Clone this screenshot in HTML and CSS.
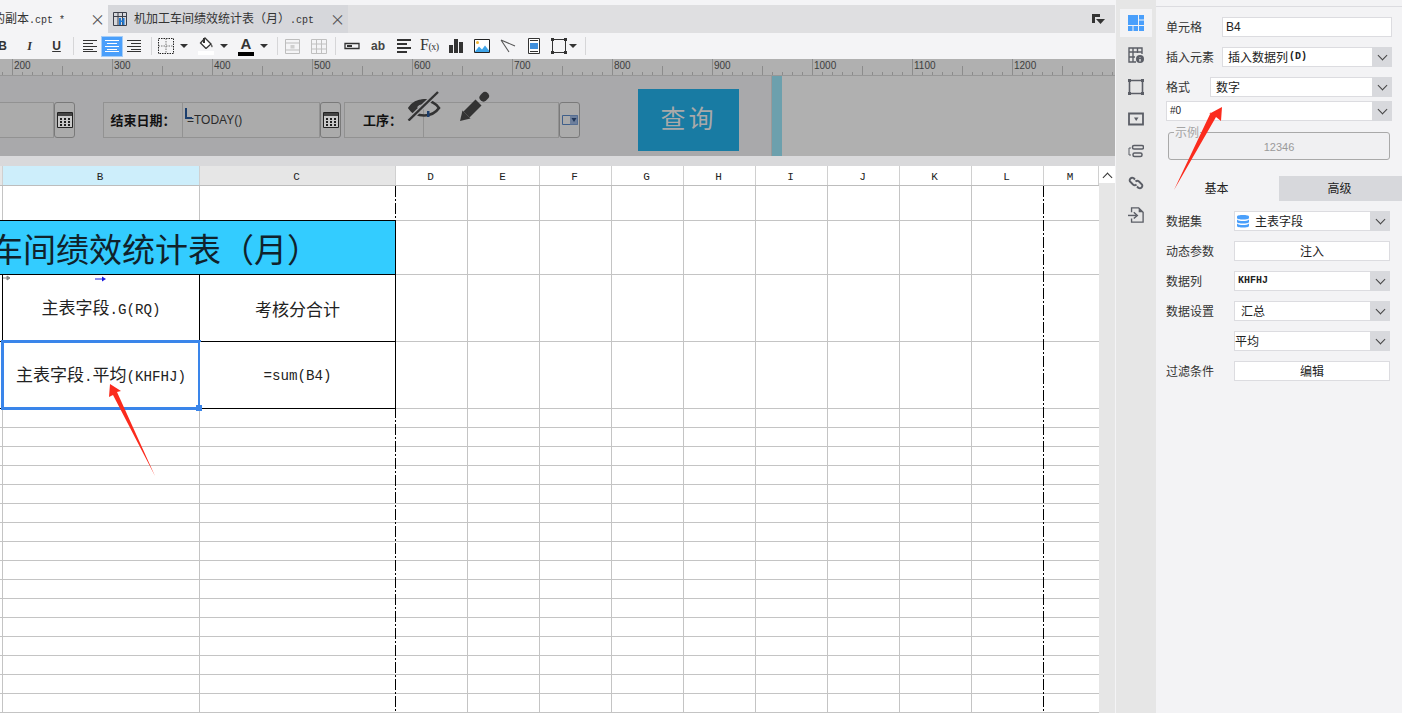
FILE: index.html
```html
<!DOCTYPE html>
<html lang="zh-CN">
<head>
<meta charset="UTF-8">
<meta name="viewport" content="width=device-width, initial-scale=1.0">
<title>报表设计器</title>
<link rel="stylesheet" href="styles.css">
</head>
<body>

<div class="editor">
    <div class="top-strip"></div>

    <!-- Tabs -->
    <div class="tabs-bar">
        <div class="file-tab active">
            <span class="tab-name clipped">的副本<span class="mono-sm">.cpt *</span></span>
            <span class="tab-close">×</span>
        </div>
        <div class="file-tab">
            <svg class="tab-icon" viewBox="0 0 14 14"><path d="M.5.5h13v13H.5zM.5 4.500h13M5 .5v13M9.500.5v13" fill="none" stroke="#3b3f4a"/><path d="M6 6h2v2.500h1.500V6h2v7h-2v-3H8v3H6z" fill="#1f78d1"/></svg>
            <span class="tab-name">机加工车间绩效统计表（月）<span class="mono-sm">.cpt</span></span>
            <span class="tab-close">×</span>
        </div>
        <svg class="tabs-menu" viewBox="0 0 13 10"><path d="M0 0h8v3H3v6H0z" fill="#333"/><path d="M4 5h9l-4.500 5z" fill="#333"/></svg>
    </div>

    <!-- Toolbar -->
    <div class="toolbar">
        <span class="tool-text bold">B</span>
        <span class="tool-text italic">I</span>
        <span class="tool-text under">U</span>
        <span class="sep sep-a"></span>
        <span class="tool-align"><svg viewBox="0 0 14 12"><path d="M0 .5h14M0 3.500h10M0 6.500h14M0 9.500h10M0 11.500h14" stroke="#333"/></svg></span>
        <span class="tool-align on"><svg viewBox="0 0 14 12"><path d="M0 .5h14M2 3.500h10M0 6.500h14M2 9.500h10M0 11.500h14" stroke="#fff"/></svg></span>
        <span class="tool-align"><svg viewBox="0 0 14 12"><path d="M0 .5h14M4 3.500h10M0 6.500h14M4 9.500h10M0 11.500h14" stroke="#333"/></svg></span>
        <span class="sep sep-b"></span>
        <span class="tool-drop">
            <svg class="ico" viewBox="0 0 16 16"><path d="M.5.5h15v15H.5z" fill="none" stroke="#222" stroke-dasharray="1.500 1"/><path d="M8 .5v15M.5 8h15" stroke="#777" stroke-dasharray="1.500 1"/></svg>
            <i class="caret"></i>
        </span>
        <span class="tool-drop">
            <span class="fill-icon">
                <svg viewBox="0 0 16 12"><path d="M7 1l6 6-5 4.500L2.500 6z" fill="#fff" stroke="#333" stroke-width="1.300"/><path d="M5 1h2v5H5z" fill="#333"/><path d="M13.500 7c1 1.500 1.500 2.500.5 3.500-1-1-1-2-.5-3.500z" fill="#333"/></svg>
                <i class="color-bar white"></i>
            </span>
            <i class="caret"></i>
        </span>
        <span class="tool-drop">
            <span class="font-color">
                <b>A</b>
                <i class="color-bar black"></i>
            </span>
            <i class="caret"></i>
        </span>
        <span class="sep sep-c"></span>
        <svg class="ico ico-off" viewBox="0 0 15 15"><path d="M.5.5h14v14H.5zM.5 4h14M.5 11h14" fill="none" stroke="#bdbdbd"/><path d="M5.500 6h4v3.500h-4z" fill="#cfcfcf"/></svg>
        <svg class="ico ico-off2" viewBox="0 0 16 15"><path d="M.5.500h15v14H.5zM.5 5h15M.5 10h15M5.500.5v14M10.500.5v14" fill="none" stroke="#c0c0c0"/></svg>
        <span class="sep sep-d"></span>
        <span class="tool-group">
            <svg class="ico" viewBox="0 0 16 16"><path d="M1 5.500h14v5H1z" fill="none" stroke="#333" stroke-width="1.300"/><path d="M3 7h5v2H3z" fill="#333"/></svg>
            <span class="ab">ab</span>
            <svg class="ico" viewBox="0 0 16 16"><path d="M1 2h14M1 6h10M1 10h14M1 14h10" stroke="#333" stroke-width="2"/></svg>
            <span class="fx">F<small>(x)</small></span>
            <svg class="ico" viewBox="0 0 16 16"><path d="M1 7h4v8H1zM6 1h4v14H6zM11 4h4v11h-4z" fill="#333"/></svg>
            <svg class="ico" viewBox="0 0 16 16"><path d="M.5 1.500h15v13H.5z" fill="#fff" stroke="#222"/><path d="M1 13.500l4-5 3 3 3-4 4 5v1.500H1z" fill="#3ea4e8"/><circle cx="3.500" cy="4.500" r="1.500" fill="#f2b632"/></svg>
            <svg class="ico" viewBox="0 0 16 16"><path d="M1 2l14 6M1 2l8 12" fill="none" stroke="#555" stroke-width="1.100"/></svg>
            <svg class="ico" viewBox="0 0 16 16"><path d="M2.500.5h11v15h-11z" fill="#fff" stroke="#333"/><path d="M4 2.500h8M4 13.500h8" stroke="#333"/><path d="M4 5h8v6H4z" fill="#3f8fdc"/></svg>
        </span>
        <span class="tool-drop drop-last">
            <svg class="ico" viewBox="0 0 16 16"><path d="M1.500 1.500h13v13h-13z" fill="none" stroke="#333"/><path d="M0 0h3v3H0zM13 0h3v3h-3zM0 13h3v3H0zM13 13h3v3h-3z" fill="#333"/></svg>
            <i class="caret"></i>
        </span>
        <span class="sep sep-e"></span>
    </div>

    <!-- Ruler -->
    <div class="ruler">
        <span class="mark">200</span><span class="mark">300</span><span class="mark">400</span><span class="mark">500</span><span class="mark">600</span><span class="mark">700</span><span class="mark">800</span><span class="mark">900</span><span class="mark">1000</span><span class="mark">1100</span><span class="mark">1200</span>
    </div>

    <!-- Parameter pane -->
    <div class="param-bar">
        <div class="param-form">
            <div class="pfield first"></div>
            <div class="pbtn">
                <svg class="cal" viewBox="0 0 16 16"><use href="#cal"/></svg>
            </div>
            <div class="plabel gap-left">结束日期：</div>
            <div class="pfield date"><i class="cursor"></i>=TODAY()</div>
            <div class="pbtn">
                <svg class="cal" viewBox="0 0 16 16"><use href="#cal"/></svg>
            </div>
            <div class="plabel work">工序：</div>
            <div class="pfield combo"></div>
            <div class="pbtn">
                <svg class="pick" viewBox="0 0 16 10"><path d="M.5.500h15v9H.5z" fill="none" stroke="#3f5f8a"/><path d="M8 .5h7.500v9H8z" fill="#6d7f9c"/><path d="M9.500 3h5L12 7z" fill="#1f3558"/></svg>
            </div>
            <button class="query">查询</button>
        </div>
        <div class="param-handle"></div>
        <div class="param-rest"></div>
    </div>
    <div class="band"></div>

    <!-- Sheet -->
    <div class="sheet-wrap">
        <div class="sheet">
            <div class="col-head">
                <span class="h-a"></span>
                <span class="h-b">B</span>
                <span class="h-c">C</span>
                <span class="h-n">D</span><span class="h-n">E</span><span class="h-n">F</span><span class="h-n">G</span><span class="h-n">H</span><span class="h-n">I</span><span class="h-n">J</span><span class="h-n">K</span><span class="h-n">L</span>
                <span class="h-m">M</span>
            </div>
            <div class="sheet-body">
                <div class="row r-35"></div>
                <div class="row r-54">
                    <div class="cell title">车间绩效统计表（月）</div>
                </div>
                <div class="row r-67">
                    <div class="cell c-a"></div>
                    <div class="cell c-b">
                        <svg class="flow flow-grey" viewBox="0 0 8 6"><path d="M0 3h5M4 1l3 2-3 2z" stroke="#888" fill="#888"/></svg>
                        <svg class="flow flow-blue" viewBox="0 0 11 6"><path d="M0 3h8" stroke="#1a1ae0"/><path d="M7 .5L11 3 7 5.500z" fill="#1a1ae0"/></svg>
                        <span class="cell-text">主表字段<span class="mono">.G(RQ)</span></span>
                    </div>
                    <div class="cell c-c">考核分合计</div>
                </div>
                <div class="row r-67">
                    <div class="cell c-a"></div>
                    <div class="cell c-b selected"><span class="cell-text">主表字段<span class="mono">.</span>平均<span class="mono">(KHFHJ)</span></span><i class="sel-handle"></i></div>
                    <div class="cell c-c"><span class="mono formula">=sum(B4)</span></div>
                </div>
                <div class="row"></div><div class="row"></div><div class="row"></div><div class="row"></div>
                <div class="row"></div><div class="row"></div><div class="row"></div><div class="row"></div>
                <div class="row"></div><div class="row"></div><div class="row"></div><div class="row"></div>
                <div class="row"></div><div class="row"></div><div class="row"></div><div class="row"></div>
                <div class="page-break pb-c"></div>
                <div class="page-break pb-l"></div>
            </div>
        </div>
        <div class="scrollbar">
            <div class="scroll-up"><i></i></div>
        </div>
    </div>
</div>

<!-- Icon strip -->
<div class="icon-strip">
    <div class="side-tile on">
        <svg viewBox="0 0 16 16"><path d="M0 0h10v10H0zM11 0h5v4.500h-5zM11 5.500h5V10h-5zM0 11h4.500v5H0zM5.500 11H10v5H5.500zM11 11h5v5h-5z" fill="#4a9ffb"/></svg>
    </div>
    <div class="side-tile">
        <svg viewBox="0 0 16 16"><path d="M8 15H1V1h13v6M1 5h13M1 10h6M5 1v14M9.500 1v5" fill="none" stroke="#5b5e66" stroke-width="1.400"/><circle cx="12" cy="12" r="4" fill="#5b5e66"/><path d="M12 10.500V11M12 12v2.500" stroke="#fff" stroke-width="1.200"/></svg>
    </div>
    <div class="side-tile">
        <svg viewBox="0 0 16 16"><path d="M1.500 1.500h13v13h-13z" fill="none" stroke="#5b5e66" stroke-width="1.600"/><path d="M0 0h3v3H0zM13 0h3v3h-3zM0 13h3v3H0zM13 13h3v3h-3z" fill="#5b5e66"/></svg>
    </div>
    <div class="side-tile">
        <svg viewBox="0 0 16 16"><path d="M1 2.500h14v11H1z" fill="none" stroke="#5b5e66" stroke-width="1.800"/><path d="M6 6.500h4.500L8.200 10z" fill="#5b5e66"/></svg>
    </div>
    <div class="side-tile">
        <svg viewBox="0 0 16 16"><path d="M3 5H1v7h2" fill="none" stroke="#5b5e66"/><rect x="4.500" y="2.500" width="11" height="3.500" rx="1.500" fill="none" stroke="#5b5e66" stroke-width="1.500"/><rect x="5" y="10" width="9" height="3.500" rx="1.500" fill="none" stroke="#5b5e66" stroke-width="1.500"/></svg>
    </div>
    <div class="side-tile">
        <svg viewBox="0 0 16 16"><path d="M7 4.500L5.500 3a2.600 2.600 0 0 0-3.500 3.500l3 3a2.600 2.600 0 0 0 3.500 0M9 11.500l1.500 1.500a2.600 2.600 0 0 0 3.500-3.500l-3-3a2.600 2.600 0 0 0-3.500 0" fill="none" stroke="#5b5e66" stroke-width="1.900"/></svg>
    </div>
    <div class="side-tile">
        <svg viewBox="0 0 18 18"><path d="M4 6V1h8l5 5v11H4v-4" fill="none" stroke="#5b5e66" stroke-width="1.500"/><path d="M12 1v5h5" fill="#5b5e66"/><path d="M0 9.500h9" stroke="#5b5e66" stroke-width="1.600"/><path d="M6.500 6l4 3.500-4 3.500" fill="none" stroke="#5b5e66" stroke-width="1.600"/></svg>
    </div>
</div>

<!-- Properties panel -->
<div class="panel">
    <div class="panel-line"></div>
    <div class="props">
        <div class="field">
            <label class="w-56">单元格</label>
            <div class="input sans">B4</div>
        </div>
        <div class="field">
            <label class="w-56">插入元素</label>
            <div class="select"><span class="select-text pad-5">插入数据列<span class="small-key">(D)</span></span><span class="select-arrow"></span></div>
        </div>
        <div class="field">
            <label class="w-44">格式</label>
            <div class="select"><span class="select-text pad-5">数字</span><span class="select-arrow"></span></div>
        </div>
        <div class="field tight">
            <div class="select"><span class="select-text num-fmt">#0</span><span class="select-arrow"></span></div>
        </div>
        <fieldset class="sample">
            <legend>示例</legend>
            <div class="sample-num">12346</div>
        </fieldset>
    </div>

    <div class="panel-tabs">
        <div class="ptab on">基本</div>
        <div class="ptab">高级</div>
    </div>

    <div class="data-props">
        <div class="field">
            <label class="w-68">数据集</label>
            <div class="select">
                <span class="select-text ds">
                    <svg viewBox="0 0 12 14"><path d="M0 2.500C0 .5 12 .5 12 2.500v1.500C12 6 0 6 0 4zM0 5.500c2 2 10 2 12 0V8c0 2-12 2-12 0zM0 9.500c2 2 10 2 12 0V12c0 2-12 2-12 0z" fill="#4a9ffb"/></svg>
                    主表字段
                </span>
                <span class="select-arrow"></span>
            </div>
        </div>
        <div class="field">
            <label class="w-68">动态参数</label>
            <div class="btn">注入</div>
        </div>
        <div class="field">
            <label class="w-68">数据列</label>
            <div class="select"><span class="select-text col-name">KHFHJ</span><span class="select-arrow"></span></div>
        </div>
        <div class="field">
            <label class="w-68">数据设置</label>
            <div class="select"><span class="select-text pad-6">汇总</span><span class="select-arrow"></span></div>
        </div>
        <div class="field">
            <label class="w-68"></label>
            <div class="select"><span class="select-text">平均</span><span class="select-arrow"></span></div>
        </div>
        <div class="field">
            <label class="w-68">过滤条件</label>
            <div class="btn">编辑</div>
        </div>
    </div>
</div>

<!-- Shared calendar symbol -->
<svg class="defs" width="0" height="0">
    <symbol id="cal" viewBox="0 0 16 16">
        <path d="M.5.500h15v15H.5z" fill="#c9c9c9" stroke="#222"/>
        <path d="M1 1h14v3H1z" fill="#444"/>
        <path d="M3 6h2v2H3zM7 6h2v2H7zM11 6h2v2h-2zM3 9h2v2H3zM7 9h2v2H7zM11 9h2v2h-2zM3 12h2v2H3zM7 12h2v2H7zM11 12h2v2h-2z" fill="#222"/>
    </symbol>
</svg>

<!-- Things drawn over the designer -->
<svg class="eye-off" viewBox="0 0 34 30">
    <path d="M2.500 17C9 7 25 7 32 17 25 27 9 27 2.500 17z" fill="none" stroke="#333" stroke-width="2.600"/>
    <path d="M3 17C8 9 17 7 24 8.500L9 24C6 22 4.500 19.500 3 17z" fill="#333"/>
    <path d="M10 16.500c1-2 3-3 5-3l-3.500 3.500z" fill="#a9a9ab"/>
    <path d="M20 20v6h2.500v-6z" fill="#1c3f6e"/>
    <path d="M2 29L31 1" stroke="#a9a9ab" stroke-width="5"/>
    <path d="M1.500 29.500L31 1" stroke="#333" stroke-width="2.400"/>
</svg>
<svg class="pencil" viewBox="0 0 32 32">
    <path d="M1 31l2.500-10.500 8 8z" fill="#333"/>
    <path d="M7.500 24.500L19.500 12.500" stroke="#333" stroke-width="8.500"/>
    <path d="M24.500 7.500l1.500-1.500" stroke="#333" stroke-width="8" stroke-linecap="round"/>
</svg>
<svg class="arrows" viewBox="0 0 1402 713">
    <polygon points="110,384 121,391 117,392 155,476 113,395 109,397" fill="#fb2b1d"/>
    <polygon points="1222,107 1221,121 1216,117 1174,190 1211,112 1209,114" fill="#fb2b1d"/>
</svg>

</body>
</html>
```

FILE: styles.css
```css
/* Basic Reset */
* {
    margin: 0;
    padding: 0;
    box-sizing: border-box;
}

body {
    position: relative;
    display: flex;
    width: 1402px;
    height: 713px;
    overflow: hidden;
    background: #fff;
    font-family: "Noto Sans CJK SC", "Liberation Sans", sans-serif;
    font-size: 12px;
    color: #222;
}

.defs {
    position: absolute;
}

/* Editor column */
.editor {
    width: 1115px;
    flex: none;
    display: flex;
    flex-direction: column;
}

.top-strip {
    height: 5px;
    background: #f4f4f6;
}

/* Tabs */
.tabs-bar {
    height: 28px;
    display: flex;
    background: #dfdfe1;
}

.file-tab {
    display: flex;
    align-items: center;
    width: 240px;
    padding-left: 5px;
    background: #d6d7db;
    overflow: hidden;
    white-space: nowrap;
}

.file-tab.active {
    width: 108px;
    padding-left: 0;
    background: #f4f4f6;
}

.tab-icon {
    width: 14px;
    height: 14px;
    margin-right: 7px;
}

.tab-name {
    line-height: 16px;
    color: #333;
}

.tab-name.clipped {
    margin-left: -7px;
}

.mono-sm {
    font-family: "Liberation Mono", monospace;
    font-size: 10px;
}

.tab-close {
    margin-left: auto;
    width: 18px;
    font-size: 15px;
    line-height: 16px;
    color: #555;
}

.tabs-menu {
    width: 13px;
    height: 10px;
    margin: 9px 10px 0 auto;
}

/* Toolbar */
.toolbar {
    height: 26px;
    display: flex;
    align-items: center;
    background: #f4f4f6;
    white-space: nowrap;
    overflow: hidden;
}

.tool-text {
    width: 27px;
    text-align: center;
    font-family: "Liberation Sans", sans-serif;
    font-size: 12px;
    color: #333;
}

.tool-text.bold {
    margin-left: -11px;
    font-weight: bold;
}

.tool-text.italic {
    font-family: "Liberation Serif", serif;
    font-style: italic;
    font-weight: bold;
}

.tool-text.under {
    font-weight: bold;
    text-decoration: underline;
}

.sep {
    width: 1px;
    height: 18px;
    background: #d6d6d8;
    flex: none;
}

.sep-a { margin: 0 5px 0 3px; }
.sep-b { margin: 0 6px; }
.sep-c { margin: 0 7px 0 -1px; }
.sep-d { margin: 0 8px 0 8px; }
.sep-e { margin-left: 8px; }

.tool-align {
    width: 22px;
    height: 21px;
    display: flex;
    align-items: center;
    justify-content: center;
}

.tool-align svg {
    width: 14px;
    height: 12px;
}

.tool-align.on {
    background: #4a9ffb;
    border: 1px solid #a6cdf7;
}

.ico {
    width: 16px;
    height: 16px;
    flex: none;
}

.ico-off {
    width: 15px;
    height: 15px;
    margin-right: 11px;
}

.ico-off2 {
    height: 15px;
}

.tool-drop {
    display: flex;
    align-items: center;
    gap: 6px;
    margin-right: 10px;
}

.caret {
    width: 0;
    height: 0;
    border-left: 4px solid transparent;
    border-right: 4px solid transparent;
    border-top: 4px solid #333;
}

.fill-icon,
.font-color {
    width: 16px;
    display: flex;
    flex-direction: column;
    align-items: center;
}

.fill-icon svg {
    width: 16px;
    height: 12px;
}

.font-color b {
    font-family: "Liberation Sans", sans-serif;
    font-size: 15px;
    line-height: 14px;
    color: #333;
}

.color-bar {
    width: 16px;
    height: 4px;
    margin-top: 2px;
}

.color-bar.white { background: #fff; }
.color-bar.black { background: #000; margin-top: 1px; }

.tool-group {
    display: flex;
    align-items: center;
    gap: 10px;
}

.tool-drop.drop-last {
    gap: 2px;
    margin: 0 0 0 9px;
}

.ab {
    width: 16px;
    font-family: "Liberation Sans", sans-serif;
    font-weight: bold;
    font-size: 12px;
    color: #444;
    text-align: center;
}

.fx {
    width: 16px;
    margin-left: -2px;
    margin-right: 2px;
    font-family: "Liberation Serif", serif;
    font-size: 16px;
    line-height: 18px;
    letter-spacing: -0.5px;
    color: #333;
}

.fx small {
    font-size: 10px;
}

/* Ruler */
.ruler {
    height: 17px;
    display: flex;
    padding-left: 12px;
    overflow: hidden;
    background-color: #b0b0b0;
    background-image:
        linear-gradient(90deg, #8c8c8c 1px, transparent 1px),
        linear-gradient(90deg, #8c8c8c 1px, transparent 1px);
    background-size: 10px 3px, 100px 9px;
    background-position: 2px 13px, 62px 7px;
    background-repeat: repeat-x;
    border-bottom: 1px solid #979797;
}

.mark {
    width: 100px;
    flex: none;
    padding-left: 1px;
    border-left: 1px solid #8c8c8c;
    font-family: "Liberation Sans", sans-serif;
    font-size: 10px;
    line-height: 14px;
    color: #3d3d3d;
}

/* Parameter pane */
.param-bar {
    height: 80px;
    display: flex;
}

.param-form {
    width: 772px;
    display: flex;
    align-items: center;
    padding-top: 8px;
    background: #a9a9ab;
    border-right: 1px solid #999;
}

.pfield,
.plabel {
    height: 36px;
    border: 1px solid #929292;
    background: #ababab;
    display: flex;
    align-items: center;
}

.pfield.first {
    width: 54px;
    border-left: 0;
}

.pfield.date {
    position: relative;
    width: 137px;
    border-left: 0;
    padding-left: 4px;
    font-family: "Liberation Sans", sans-serif;
    color: #2b2b2b;
}

.cursor {
    position: absolute;
    left: 2px;
    top: 5px;
    width: 7px;
    height: 11px;
    border-left: 2px solid #1c3f6e;
    border-bottom: 2px solid #1c3f6e;
}

.pfield.combo {
    width: 135px;
    border-left: 0;
}

.pbtn {
    width: 21px;
    height: 36px;
    border: 1px solid #7a7a7a;
    border-radius: 3px;
    background: #ababab;
    display: flex;
    align-items: center;
    justify-content: center;
}

.cal {
    width: 16px;
    height: 16px;
}

.pick {
    width: 16px;
    height: 10px;
}

.plabel {
    width: 80px;
    justify-content: center;
    padding-bottom: 2px;
    font-size: 13px;
    font-weight: bold;
    color: #111;
}

.plabel.gap-left {
    margin-left: 28px;
}

.plabel.work {
    margin-left: 3px;
    padding-right: 3px;
}

.query {
    width: 101px;
    height: 62px;
    margin-left: 58px;
    padding-bottom: 6px;
    border: 0;
    background: #187ba3;
    color: #a9a9a9;
    font-family: "Liberation Serif", "Noto Sans CJK SC", serif;
    font-size: 25px;
    letter-spacing: 3px;
}

.param-handle {
    width: 10px;
    background: #6ca0ad;
}

.param-rest {
    flex: 1;
    background: #b0b0b0;
}

.band {
    height: 10px;
    background: #d9d9db;
}

/* Sheet */
.sheet-wrap {
    flex: 1;
    display: flex;
    min-height: 0;
}

.sheet {
    width: 1099px;
    flex: none;
}

.col-head {
    height: 20px;
    display: flex;
    font-family: "Liberation Mono", monospace;
    font-size: 11px;
    line-height: 22px;
    text-align: center;
    border-bottom: 1px solid #bdbdbd;
}

.col-head span {
    flex: none;
    padding-right: 2px;
    border-right: 1px solid #d0d0d0;
}

.col-head .h-a {
    padding-right: 0;
}

.h-a { width: 3px; background: #e6e6e6; }
.h-b { width: 197px; background: #cdeefb; }
.h-c { width: 196px; background: #e6e6e6; }
.h-n { width: 72px; }
.h-m { width: 55px; }

.sheet-body {
    --line: linear-gradient(#c4c4c4, #c4c4c4);
    position: relative;
    height: 527px;
    overflow: hidden;
    background:
        var(--line) 2px 0 / 1px 100% no-repeat,
        var(--line) 199px 0 / 1px 100% no-repeat,
        var(--line) 467px 0 / 1px 100% no-repeat,
        var(--line) 539px 0 / 1px 100% no-repeat,
        var(--line) 611px 0 / 1px 100% no-repeat,
        var(--line) 683px 0 / 1px 100% no-repeat,
        var(--line) 755px 0 / 1px 100% no-repeat,
        var(--line) 827px 0 / 1px 100% no-repeat,
        var(--line) 899px 0 / 1px 100% no-repeat,
        var(--line) 971px 0 / 1px 100% no-repeat;
}

.row {
    height: 19px;
    display: flex;
    border-bottom: 1px solid #c4c4c4;
}

.row.r-35 { height: 35px; }
.row.r-54 { height: 54px; }
.row.r-67 { height: 67px; }

.cell {
    flex: none;
    margin-bottom: -1px;
    display: flex;
    align-items: center;
    justify-content: center;
    background: #fff;
    border-right: 1px solid #000;
    border-bottom: 1px solid #000;
    font-size: 17px;
    white-space: nowrap;
    position: relative;
}

.cell-text {
    line-height: 24px;
}

.title {
    width: 396px;
    margin-top: -1px;
    justify-content: flex-start;
    overflow: hidden;
    background: #33ccff;
    border-top: 1px solid #000;
    font-size: 33px;
    line-height: 40px;
    text-indent: -10px;
    color: #10222b;
}

.c-a { width: 3px; }
.c-b { width: 197px; }
.c-c { width: 196px; }

.mono {
    font-family: "Liberation Mono", monospace;
    font-size: 14.2px;
}

.mono.formula {
    padding-top: 2px;
}

.flow {
    position: absolute;
    height: 6px;
}

.flow-grey {
    left: 0;
    top: 0;
    width: 8px;
}

.flow-blue {
    left: 92px;
    top: 1px;
    width: 11px;
}

.selected::after {
    content: "";
    position: absolute;
    left: -2px;
    top: -2px;
    right: -2px;
    bottom: -2px;
    border: 3px solid #3a85ea;
}

.sel-handle {
    position: absolute;
    right: -3px;
    bottom: -3px;
    width: 6px;
    height: 6px;
    background: #3a85ea;
    z-index: 1;
}

.page-break {
    position: absolute;
    top: 0;
    bottom: 0;
    width: 1px;
    background: repeating-linear-gradient(180deg, #000 0 11px, transparent 11px 13px, #000 13px 15px, transparent 15px 17px);
}

.pb-c { left: 395px; }
.pb-l { left: 1043px; }

.scrollbar {
    width: 16px;
    background: #e6e6e6;
}

.scroll-up {
    height: 17px;
    background: #fff;
    display: flex;
    align-items: center;
    justify-content: center;
}

.scroll-up i {
    width: 7px;
    height: 7px;
    margin-top: 5px;
    border-left: 1px solid #333;
    border-top: 1px solid #333;
    transform: rotate(45deg);
}

/* Icon strip */
.icon-strip {
    width: 41px;
    flex: none;
    display: flex;
    flex-direction: column;
    align-items: center;
    gap: 4px;
    padding-top: 9px;
    background: #e6e6e6;
    border-left: 1px solid #f4f4f6;
}

.side-tile {
    width: 32px;
    height: 28px;
    display: flex;
    align-items: center;
    justify-content: center;
}

.side-tile.on {
    background: #f3f3f5;
}

.side-tile svg {
    width: 16px;
    height: 16px;
}

/* Properties panel */
.panel {
    flex: 1;
    background: #f3f3f5;
    position: relative;
}

.panel-line {
    height: 1px;
    margin-top: 6px;
    background: #dcdce0;
}

.props {
    height: 169px;
    padding: 10px 10px 0;
}

.field {
    display: flex;
    align-items: center;
    height: 20px;
    margin-bottom: 10px;
}

.field.tight {
    margin-top: -6px;
    margin-bottom: 4px;
}

.field label {
    flex: none;
    margin-top: -2px;
    color: #333;
}

.w-44 { width: 44px; }
.w-56 { width: 56px; }
.w-68 { width: 68px; }

.input,
.select,
.btn {
    flex: 1;
    height: 20px;
    display: flex;
    align-items: center;
    background: #fff;
    border: 1px solid #dcdce0;
}

.input.sans {
    padding-left: 3px;
    font-family: "Liberation Sans", sans-serif;
}

.select-text {
    flex: 1;
    display: flex;
    align-items: center;
    line-height: 16px;
    white-space: nowrap;
}

.select-text.pad-5 { padding-left: 5px; }
.select-text.pad-6 { padding-left: 6px; }

.small-key {
    font-family: "Liberation Mono", monospace;
    font-size: 10px;
    font-weight: bold;
    margin-left: 1px;
}

.num-fmt {
    padding-left: 3px;
    font-family: "Liberation Sans", sans-serif;
    font-size: 10px;
}

.col-name {
    padding-left: 3px;
    font-family: "Liberation Mono", monospace;
    font-size: 10px;
    font-weight: bold;
}

.select-text.ds svg {
    width: 12px;
    height: 14px;
    margin: 0 6px 0 2px;
}

.select-arrow {
    width: 20px;
    height: 20px;
    margin-right: -1px;
    flex: none;
    background: #d8d9dd;
    display: flex;
    justify-content: center;
}

.select-arrow::after {
    content: "";
    width: 6px;
    height: 6px;
    margin-top: 5px;
    border-right: 1px solid #444;
    border-bottom: 1px solid #444;
    transform: rotate(45deg);
}

.btn {
    justify-content: center;
    line-height: 16px;
}

.sample {
    height: 35px;
    margin: 0 2px;
    border: 1px solid #a9a9a9;
    border-radius: 3px;
    background: #f0f0f2;
}

.sample legend {
    margin-left: 5px;
    padding: 0 1px;
    font-size: 12px;
    line-height: 14px;
    color: #a5a5a5;
}

.sample-num {
    text-align: center;
    font-family: "Liberation Sans", sans-serif;
    font-size: 11px;
    line-height: 16px;
    color: #9a9a9a;
}

.panel-tabs {
    height: 25px;
    display: flex;
}

.ptab {
    flex: 1;
    display: flex;
    align-items: center;
    justify-content: center;
    padding: 0 2px 3px 0;
    background: #d7d8dc;
}

.ptab.on {
    background: #f3f3f5;
}

.data-props {
    padding: 10px 12px 0 10px;
}

/* Overlays */
.eye-off {
    position: absolute;
    left: 407px;
    top: 91px;
    width: 34px;
    height: 30px;
}

.pencil {
    position: absolute;
    left: 459px;
    top: 90px;
    width: 32px;
    height: 32px;
}

.arrows {
    position: absolute;
    left: 0;
    top: 0;
    width: 1402px;
    height: 713px;
    pointer-events: none;
}
```
